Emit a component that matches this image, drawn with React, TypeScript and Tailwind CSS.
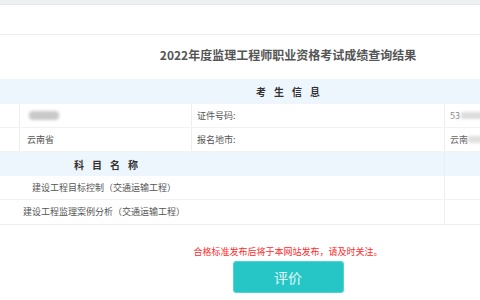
export default function App() {
  return (
    <div className="h-[300px] w-[480px] overflow-hidden bg-white font-['Noto_Sans_CJK_SC','Noto_Sans',sans-serif] text-[#555]">
      {/* top strip */}
      <div className="h-[5px] border-b border-[#e4e9ef] bg-[#eef0f2]" />
      <div className="h-[30px] border-b border-[#eeeeee]" />

      <div className="w-[576px]">
        {/* title */}
        <div className="flex h-[44px] items-center justify-center pb-[5px] text-[12px] font-bold text-[#555]">
          2022年度监理工程师职业资格考试成绩查询结果
        </div>

        {/* 考生信息 */}
        <div className="flex h-[25px] items-center justify-center bg-[#eef6fd] text-[10px] font-bold tracking-[8px] text-[#333]">
          <span className="pl-[8px]">考生信息</span>
        </div>

        {/* row 1 */}
        <div className="flex h-[24px] border-b border-[#f2f2f2] text-[9px]">
          <div className="w-[20px] border-r border-[#eeeeee]" />
          <div className="flex w-[172px] items-center border-r border-[#eeeeee] pl-[9px]">
            <span className="h-[9px] w-[30px] rounded-sm bg-[#c9c9c9] blur-[1.5px]" />
          </div>
          <div className="flex w-[253px] items-center border-r border-[#eeeeee] pl-[5px] text-[#555]">
            证件号码:
          </div>
          <div className="flex flex-1 items-center pl-[5px] text-[#888]">
            53
            <span className="ml-[1px] h-[7px] w-[30px] bg-[#dcdcdc] blur-[1.5px]" />
          </div>
        </div>

        {/* row 2 */}
        <div className="flex h-[24px] border-b border-[#f2f2f2] text-[9px]">
          <div className="w-[20px] border-r border-[#eeeeee]" />
          <div className="flex w-[172px] items-center border-r border-[#eeeeee] pl-[7px] text-[#555]">
            云南省
          </div>
          <div className="flex w-[253px] items-center border-r border-[#eeeeee] pl-[5px] text-[#555]">
            报名地市:
          </div>
          <div className="flex flex-1 items-center pl-[5px] text-[#666]">
            云南
            <span className="h-[7px] w-[24px] bg-[#e0e0e0] blur-[1.5px]" />
          </div>
        </div>

        {/* 科目名称 */}
        <div className="flex h-[24px] bg-[#eef6fd] text-[10px] font-bold">
          <div className="flex w-[445px] items-center border-r border-[#e6eef6]">
            <span className="w-[212px] pl-[8px] text-center tracking-[8px] text-[#333]">科目名称</span>
          </div>
          <div className="flex-1" />
        </div>

        {/* subjects */}
        <div className="flex h-[24px] border-b border-[#f2f2f2] text-[9px]">
          <div className="flex w-[445px] items-center border-r border-[#eeeeee]">
            <span className="w-[208px] text-center">建设工程目标控制（交通运输工程）</span>
          </div>
          <div className="flex-1" />
        </div>
        <div className="flex h-[25px] border-b border-[#eeeeee] text-[9px]">
          <div className="flex w-[445px] items-center border-r border-[#eeeeee]">
            <span className="w-[208px] text-center">建设工程监理案例分析（交通运输工程）</span>
          </div>
          <div className="flex-1" />
        </div>

        {/* notice */}
        <div className="flex h-[36px] items-center justify-center pt-[17px] text-[9px] text-[#ff2a2a]">
          合格标准发布后将于本网站发布，请及时关注。
        </div>

        <div className="flex justify-center">
          <button className="h-[32px] w-[111px] rounded-[3px] border border-[#4fd3d3] bg-[#27c6c6] text-[14px] text-[#e2f8f8]">
            评价
          </button>
        </div>
      </div>
    </div>
  )
}
